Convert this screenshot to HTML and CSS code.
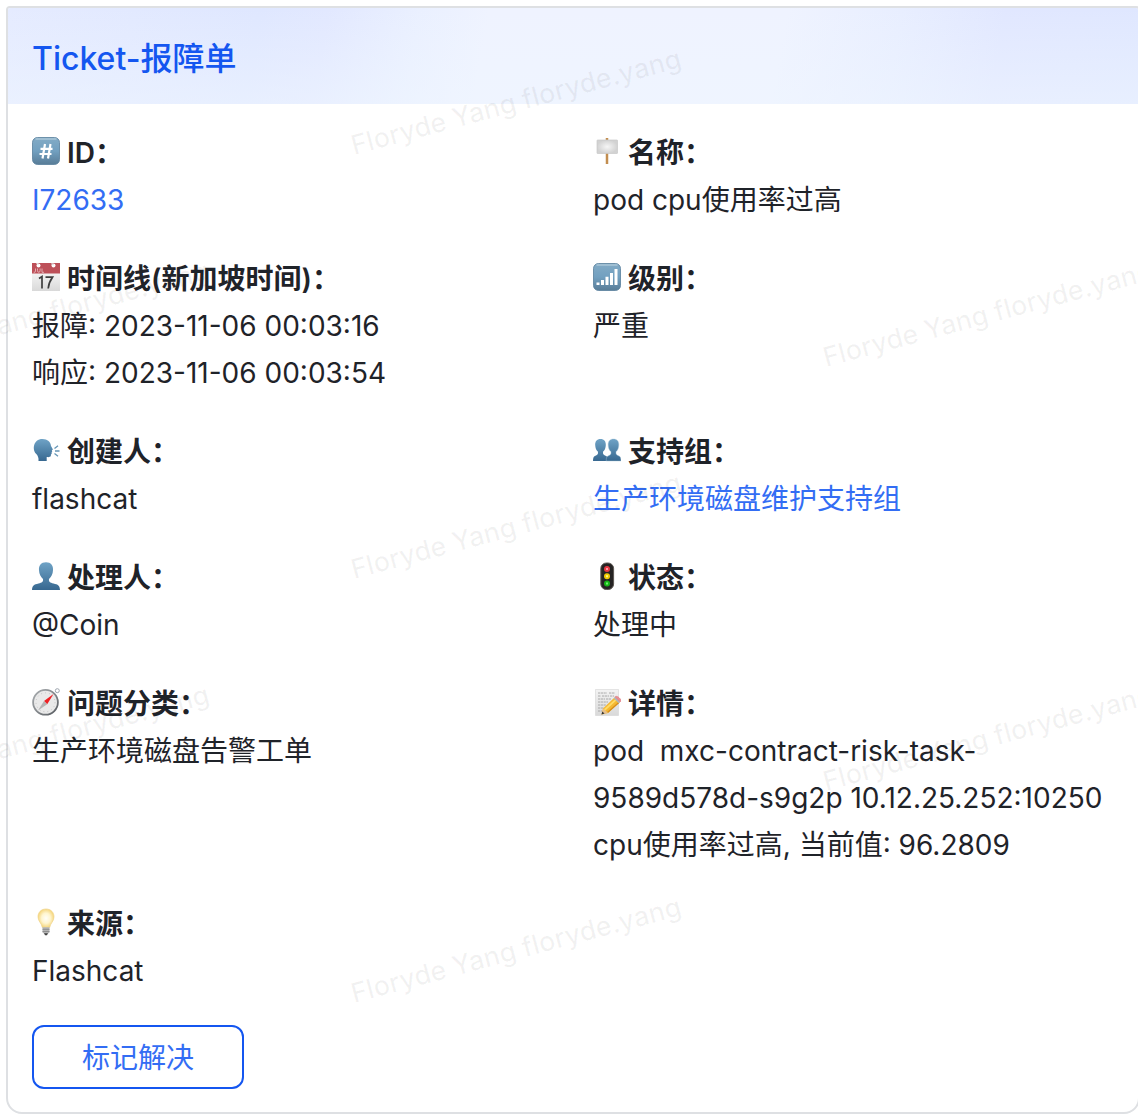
FILE: index.html
```html
<!DOCTYPE html>
<html lang="zh-CN">
<head>
<meta charset="utf-8">
<meta name="viewport" content="width=device-width, initial-scale=1">
<title>Ticket-报障单</title>
<link rel="stylesheet" href="styles.css">
</head>
<body>
<svg class="defs" aria-hidden="true">
  <defs>
    <linearGradient id="tile" x1="0" y1="0" x2="0" y2="1"><stop offset="0" stop-color="#83abc6"/><stop offset=".5" stop-color="#72a0c0"/><stop offset="1" stop-color="#587c97"/></linearGradient>
    <linearGradient id="person" x1="0" y1="0" x2="0" y2="1"><stop offset="0" stop-color="#6fa3c6"/><stop offset="1" stop-color="#376890"/></linearGradient>
    <radialGradient id="board"><stop offset="0" stop-color="#f6f6f6"/><stop offset="1" stop-color="#d2d2d2"/></radialGradient>
    <linearGradient id="page" x1="0" y1="0" x2="0" y2="1"><stop offset="0" stop-color="#f3f3f3"/><stop offset="1" stop-color="#d9d9d9"/></linearGradient>
    <linearGradient id="rim" x1="0" y1="0" x2="1" y2="1"><stop offset="0" stop-color="#a9adb0"/><stop offset=".5" stop-color="#85898d"/><stop offset="1" stop-color="#55595e"/></linearGradient>
    <radialGradient id="glass" cx=".5" cy=".5"><stop offset="0" stop-color="#fffef8"/><stop offset=".55" stop-color="#fff5cf"/><stop offset="1" stop-color="#f5d67e"/></radialGradient>
  </defs>
</svg>
<main class="card">
  <header class="card-header"><h1 class="title">Ticket-报障单</h1></header>
  <div class="card-body">
    <dl class="fields">
      <div class="field">
        <dt><svg class="icon" viewBox="0 0 28 28" aria-hidden="true"><rect x=".5" y=".5" width="27" height="27" rx="5" fill="url(#tile)" stroke="#587f9c" stroke-width=".8"/><path d="M4 2h20" stroke="#a9c6d8" stroke-width="1.500" stroke-linecap="round"/><path d="M13 7L10.500 21.500M18.500 7L16 21.500M8.500 11.800h12M7.500 17h12" stroke="#fff" stroke-width="2.200" fill="none"/></svg>ID：</dt>
        <dd><a class="link" href="#ticket">I72633</a></dd>
      </div>
      <div class="field">
        <dt><svg class="icon" viewBox="0 0 28 28" aria-hidden="true"><path d="M14 1v26" stroke="#c28d4f" stroke-width="2.500"/><rect x="4" y="3" width="20.500" height="13.500" rx=".5" fill="url(#board)" stroke="#c8c8c8" stroke-width=".7"/></svg>名称：</dt>
        <dd>pod cpu使用率过高</dd>
      </div>
      <div class="field">
        <dt><svg class="icon" viewBox="0 0 28 28" aria-hidden="true"><path d="M0 10h28v18H0z" fill="url(#page)"/><path d="M0 0h28v10.500H0z" fill="#bd5059"/><path d="M3.500 5.500v2.700q0 1.500-1.800 1M5.500 5.500v2q0 1.800 1.300 1.800T8.100 7.500v-2M10 5.500v3.800h2" stroke="#e5b5b8" stroke-width=".9" fill="none"/><circle cx="6.500" cy="2.500" r="2" fill="#fff"/><circle cx="21.500" cy="2.500" r="2" fill="#fff"/><path d="M6.500 1.500l-2-1.500M21.500 2l-2-1.500" stroke="#ddd" stroke-width="1.400"/><path d="M7 15.500l3-2v12M13.500 14.200h7c-2.500 3.500-4 7-4.300 11.300" fill="none" stroke="#3e3e3e" stroke-width="1.700"/></svg>时间线(新加坡时间)：</dt>
        <dd>报障: 2023-11-06 00:03:16<br>响应: 2023-11-06 00:03:54</dd>
      </div>
      <div class="field">
        <dt><svg class="icon" viewBox="0 0 28 28" aria-hidden="true"><rect x=".5" y=".5" width="27" height="27" rx="5" fill="url(#tile)" stroke="#587f9c" stroke-width=".8"/><path d="M4 2h20" stroke="#a9c6d8" stroke-width="1.500" stroke-linecap="round"/><path d="M3.500 19.500h3V22h-3zM8 17h3v5H8zM12.500 13.800h3V22h-3zM17 10h3v12h-3zM21.500 6h3v16h-3z" fill="#fff"/></svg>级别：</dt>
        <dd>严重</dd>
      </div>
      <div class="field">
        <dt><svg class="icon" viewBox="0 0 28 28" aria-hidden="true"><path d="M10.500 3c5 0 8.300 3 8.500 7l1.700 3c.3.700 0 1-.8 1.200l.3 1.800-.8.800.4.900-.9.900c.3 2-.7 2.900-4.200 2.400v4H6.500c.3-3-.5-5.500-2.700-7.500C.3 14 .9 3 10.500 3z" fill="url(#person)"/><path d="M22.500 12.500l3.500-2.800M23 15h4.500M22.500 17.500l3.500 2.800" stroke="#6595b5" stroke-width="1.300"/></svg>创建人：</dt>
        <dd>flashcat</dd>
      </div>
      <div class="field">
        <dt><svg class="icon" viewBox="0 0 28 28" aria-hidden="true"><path d="M7.500 3c3.700 0 5.500 2.600 5.300 6-.1 3-1 5.200-2.800 6.800-.3 2.700.8 3.400 3 4.200 1.400.5 1.800 2 1.800 5H0c0-3 .6-4.500 2-5 2.200-.8 3.300-1.500 3-4.200C3.200 14.200 2.300 12 2.200 9 2 5.600 3.800 3 7.500 3z" fill="url(#person)"/><path d="M20.500 3c3.700 0 5.500 2.600 5.300 6-.1 3-1 5.200-2.800 6.800-.3 2.700.8 3.400 3 4.200 1.400.5 2 2 2 5H13.200c0-3 .4-4.500 1.800-5 2.200-.8 3.300-1.500 3-4.200-1.800-1.600-2.700-3.800-2.800-6.800-.2-3.400 1.600-6 5.300-6z" fill="url(#person)" stroke="#a9c4d6" stroke-width=".4"/></svg>支持组：</dt>
        <dd><a class="link" href="#group">生产环境磁盘维护支持组</a></dd>
      </div>
      <div class="field">
        <dt><svg class="icon" viewBox="0 0 28 28" aria-hidden="true"><path d="M14 .3c5 0 7.400 3.500 7 8-.2 4-1.700 6.700-4 8.700-.4 2.800 1 3.700 4.500 4.500 4.600 1 6.300 2 6.500 6.500H0c.2-4.500 1.900-5.500 6.500-6.500 3.500-.8 4.900-1.700 4.500-4.500-2.300-2-3.800-4.700-4-8.700-.4-4.500 2-8 7-8z" fill="url(#person)"/></svg>处理人：</dt>
        <dd>@Coin</dd>
      </div>
      <div class="field">
        <dt><svg class="icon" viewBox="0 0 28 28" aria-hidden="true"><rect x="7.800" y="1" width="12.800" height="26.500" rx="5.500" fill="#252323" stroke="#5c5752" stroke-width="1"/><circle cx="14" cy="7" r="3" fill="#e93743"/><circle cx="14" cy="14.300" r="3" fill="#efc900"/><circle cx="14" cy="21.500" r="3" fill="#16b516"/><path d="M13 7h2" stroke="#ff9ba2" stroke-width="2"/><path d="M13 14.300h2" stroke="#fff58c" stroke-width="2"/><path d="M13 21.500h2" stroke="#6df56d" stroke-width="2"/></svg>状态：</dt>
        <dd>处理中</dd>
      </div>
      <div class="field">
        <dt><svg class="icon" viewBox="0 0 28 28" aria-hidden="true"><circle cx="25.300" cy="2.700" r="2" fill="none" stroke="#9ca4ad" stroke-width="1"/><circle cx="13.500" cy="14.300" r="12.400" fill="#e9e9e9" stroke="url(#rim)" stroke-width="1.800"/><circle cx="13.500" cy="14.300" r="9.500" fill="none" stroke="#c4c4c4" stroke-width="1" stroke-dasharray="1 3"/><path d="M21.500 6L12 13l3.200 3.200z" fill="#ee2024"/><path d="M12 13l3.200 3.200L6 22.500z" fill="#b4b4b4"/></svg>问题分类：</dt>
        <dd>生产环境磁盘告警工单</dd>
      </div>
      <div class="field">
        <dt><svg class="icon" viewBox="0 0 28 28" aria-hidden="true"><path d="M2.500 1.500h23v26h-23z" fill="url(#page)" stroke="#d5d5d5" stroke-width=".6"/><path d="M5 5h9m2 0h6M5 8h3m1 0h7m1 0h4M5 11h7m1 0h5M5 14h10M5 17h8M5 20h6M5 23h4" stroke="#999" stroke-width=".8" stroke-dasharray="2.200 .6"/><path d="M8.500 26.500l1.500-6L21.500 9.500l5 5L15 25z" fill="#f5b832"/><path d="M11.500 22L23.300 11.300" stroke="#ffdc67" stroke-width="1.800"/><path d="M14.500 24.500L26.200 14.300" stroke="#d48c1c" stroke-width="1.200"/><path d="M8.500 26.500l1.500-6 5 4.500z" fill="#e5bf8c"/><path d="M8.500 26.500l.8-3 2.200 2z" fill="#333"/><path d="M20.700 10.200l1.500-1.400 5 5-1.500 1.400z" fill="#aeb6ba"/><path d="M22.200 8.800c1.800-1.800 7.300 3 5 5z" fill="#ee8e93" stroke="#de7880" stroke-width=".8"/></svg>详情：</dt>
        <dd>pod&nbsp; mxc-contract-risk-task-9589d578d-s9g2p 10.12.25.252:10250 cpu使用率过高, 当前值: 96.2809</dd>
      </div>
      <div class="field">
        <dt><svg class="icon" viewBox="0 0 28 28" aria-hidden="true"><path d="M14 1c5 0 8 3.500 8 7.800 0 4.700-3.500 6-4.300 10.700h-7.400C9.500 14.800 6 13.500 6 8.800 6 4.500 9 1 14 1z" fill="url(#glass)" stroke="#efd48b" stroke-width=".7"/><path d="M10.500 19.200h7v5.300l-2 1.500h-3l-2-1.500z" fill="#b5b5b5"/><path d="M10.500 21.300h7M10.500 23.500h7" stroke="#858585" stroke-width=".8"/><path d="M12 25.300h4l-1 2h-2z" fill="#444"/></svg>来源：</dt>
        <dd>Flashcat</dd>
      </div>
    </dl>
    <button class="resolve" type="button">标记解决</button>
  </div>
</main>
<svg class="watermark" aria-hidden="true">
  <text transform="translate(354 155) rotate(-15)">Floryde Yang floryde.yang</text>
  <text transform="translate(-118 367) rotate(-15)">Floryde Yang floryde.yang</text>
  <text transform="translate(826 367) rotate(-15)">Floryde Yang floryde.yang</text>
  <text transform="translate(354 579) rotate(-15)">Floryde Yang floryde.yang</text>
  <text transform="translate(-118 791) rotate(-15)">Floryde Yang floryde.yang</text>
  <text transform="translate(826 791) rotate(-15)">Floryde Yang floryde.yang</text>
  <text transform="translate(354 1003) rotate(-15)">Floryde Yang floryde.yang</text>
</svg>
</body>
</html>
```
FILE: styles.css
```css
* {
  box-sizing: border-box;
}

body {
  position: relative;
  margin: 0;
  padding: 6px 0 0 6px;
  overflow-x: hidden;
  background: #fff;
  color: #1f2329;
  font-family: Inter, "Noto Sans CJK SC", sans-serif;
  font-size: 28px;
  line-height: 47px;
}

.defs {
  position: absolute;
  width: 0;
  height: 0;
}

.card {
  margin-right: -2px;
  border: 2px solid #dee0e3;
  border-radius: 4px 4px 16px 16px;
  background: #fff;
}

.card-header {
  display: flex;
  align-items: center;
  min-height: 96px;
  padding: 5px 24px 0;
  border-radius: 2px 2px 0 0;
  background:
    linear-gradient(to bottom, transparent, rgba(239, 246, 255, 0.55)),
    linear-gradient(100deg, #e5ebff 0%, #dfe7ff 22%, #e2e8ff 28%, #eaf0ff 36%, #eff3ff 42%, #eff3ff 68%, #e8eeff 78%, #e1e7ff 87%, #dfe7ff 100%);
}

.title {
  margin: 0;
  color: #1456f0;
  font-size: 32px;
  font-weight: 500;
}

.card-body {
  padding: 26px 24px 23px;
}

.fields {
  display: grid;
  grid-template-columns: 1fr 1fr;
  gap: 32px 40px;
  margin: 0 0 30px;
}

dt {
  display: flex;
  align-items: center;
  gap: 7px;
  font-weight: 600;
}

dd {
  margin: 0;
}

.icon {
  flex: none;
  width: 28px;
  height: 28px;
  margin-bottom: 6px;
}

.link {
  color: #336df4;
  text-decoration: none;
}

.resolve {
  display: block;
  height: 64px;
  padding: 2px 48px 0;
  border: 2px solid #1456f0;
  border-radius: 12px;
  background: #fff;
  color: #336df4;
  font: inherit;
}

.watermark {
  position: absolute;
  inset: 0;
  width: 100%;
  height: 100%;
  overflow: hidden;
  pointer-events: none;
  fill: #1f2329;
  fill-opacity: 0.06;
  font-size: 27px;
  font-weight: 500;
}
```
